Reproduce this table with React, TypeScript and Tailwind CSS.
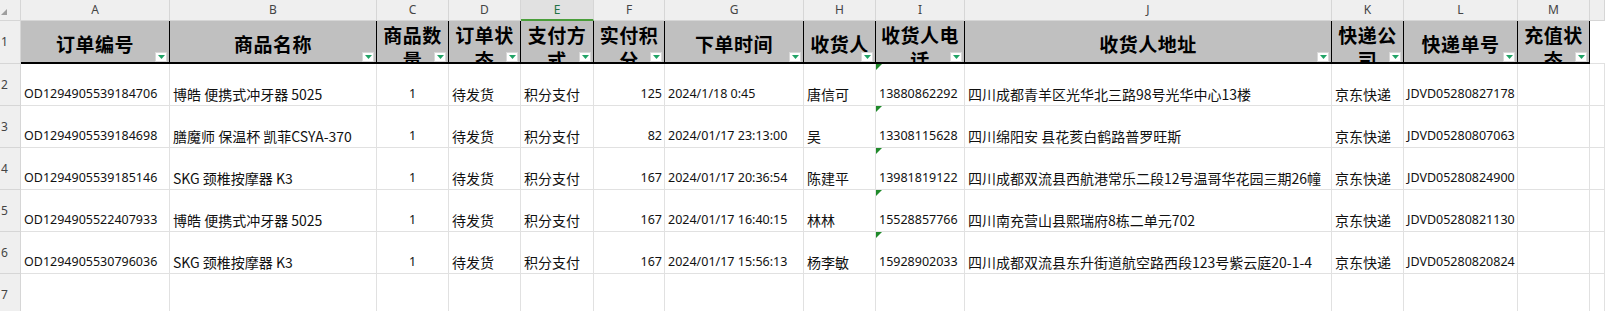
import type { ReactNode } from 'react'

const LETTERS = ['A', 'B', 'C', 'D', 'E', 'F', 'G', 'H', 'I', 'J', 'K', 'L', 'M', '']

const GRID =
  'grid grid-cols-[21px_149px_207px_72px_72px_73px_71px_139px_72px_89px_367px_72px_114px_72px_1fr]'

const HEADERS: { label: string; wrap?: boolean }[] = [
  { label: '订单编号' },
  { label: '商品名称' },
  { label: '商品数量', wrap: true },
  { label: '订单状态', wrap: true },
  { label: '支付方式', wrap: true },
  { label: '实付积分', wrap: true },
  { label: '下单时间' },
  { label: '收货人' },
  { label: '收货人电话', wrap: true },
  { label: '收货人地址' },
  { label: '快递公司', wrap: true },
  { label: '快递单号' },
  { label: '充值状态', wrap: true },
]

type Order = {
  id: string
  name: string
  qty: string
  status: string
  pay: string
  points: string
  time: string
  person: string
  phone: string
  address: string
  courier: string
  tracking: string
}

const ORDERS: Order[] = [
  { id: 'OD1294905539184706', name: '博皓 便携式冲牙器 5025', qty: '1', status: '待发货', pay: '积分支付', points: '125', time: '2024/1/18 0:45', person: '唐信可', phone: '13880862292', address: '四川成都青羊区光华北三路98号光华中心13楼', courier: '京东快递', tracking: 'JDVD05280827178' },
  { id: 'OD1294905539184698', name: '膳魔师 保温杯 凯菲CSYA-370', qty: '1', status: '待发货', pay: '积分支付', points: '82', time: '2024/01/17 23:13:00', person: '吴', phone: '13308115628', address: '四川绵阳安 县花荄白鹤路普罗旺斯', courier: '京东快递', tracking: 'JDVD05280807063' },
  { id: 'OD1294905539185146', name: 'SKG 颈椎按摩器 K3', qty: '1', status: '待发货', pay: '积分支付', points: '167', time: '2024/01/17 20:36:54', person: '陈建平', phone: '13981819122', address: '四川成都双流县西航港常乐二段12号温哥华花园三期26幢', courier: '京东快递', tracking: 'JDVD05280824900' },
  { id: 'OD1294905522407933', name: '博皓 便携式冲牙器 5025', qty: '1', status: '待发货', pay: '积分支付', points: '167', time: '2024/01/17 16:40:15', person: '林林', phone: '15528857766', address: '四川南充营山县熙瑞府8栋二单元702', courier: '京东快递', tracking: 'JDVD05280821130' },
  { id: 'OD1294905530796036', name: 'SKG 颈椎按摩器 K3', qty: '1', status: '待发货', pay: '积分支付', points: '167', time: '2024/01/17 15:56:13', person: '杨李敏', phone: '15928902033', address: '四川成都双流县东升街道航空路西段123号紫云庭20-1-4', courier: '京东快递', tracking: 'JDVD05280820824' },
]

const latin = "font-['Noto_Sans','Noto_Sans_CJK_SC',sans-serif] text-[12.5px]"
const cjk = "font-['Noto_Sans_CJK_SC',sans-serif] text-[14px]"

function FilterButton() {
  return (
    <div className="absolute right-[2px] bottom-0 w-[12px] h-[10px] bg-white border border-[#d8d8d8] flex items-center justify-center">
      <svg width="7" height="4" viewBox="0 0 7 4">
        <polygon points="0,0 7,0 3.5,4" fill="#21a366" />
      </svg>
    </div>
  )
}

function RowHead({ children, className = '' }: { children?: ReactNode; className?: string }) {
  return (
    <div className={`bg-[#efefef] border-r border-b border-[#d6d6d6] text-[12px] text-[#444] font-['Noto_Sans',sans-serif] flex items-center pl-[1px] ${className}`}>
      {children}
    </div>
  )
}

function Cell({ children, className = '', font = cjk }: { children?: ReactNode; className?: string; font?: string }) {
  return (
    <div className={`relative border-r border-b border-[#e1e1e1] flex items-end pb-[2px] px-[3px] whitespace-nowrap overflow-hidden text-[#111] leading-[18px] ${font} ${className}`}>
      {children}
    </div>
  )
}

function TextFlag() {
  return (
    <svg className="absolute top-0 left-0" width="6" height="6" viewBox="0 0 6 6">
      <polygon points="0,0 6,0 0,6" fill="#1f8a2a" />
    </svg>
  )
}

export default function App() {
  return (
    <div className="w-[1605px] h-[311px] overflow-hidden bg-white">
      {/* column letters */}
      <div className={`${GRID} h-[21px]`}>
        <div className="bg-[#efefef] border-r border-b border-[#d6d6d6] relative">
          <svg className="absolute left-[1px] top-[9px]" width="6" height="6" viewBox="0 0 6 6">
            <polygon points="6,0 6,6 0,6" fill="#9e9e9e" />
          </svg>
        </div>
        {LETTERS.map((l, i) => (
          <div
            key={i}
            className={`flex items-center justify-center text-[12px] font-['Noto_Sans',sans-serif] border-r ${
              l === 'E'
                ? 'bg-[#e1e1e1] text-[#217346] border-[#d6d6d6] border-b-2 border-b-[#4a9e3a]'
                : 'bg-[#efefef] text-[#444] border-[#d6d6d6] border-b border-b-[#d6d6d6]'
            }`}
          >
            {l}
          </div>
        ))}
      </div>

      {/* header row */}
      <div className={`${GRID} h-[43px]`}>
        <RowHead>1</RowHead>
        {HEADERS.map((h, i) => (
          <div
            key={i}
            className={`relative overflow-hidden bg-[#c0c0c0] border-r border-black border-b-2 flex justify-center text-center font-['Noto_Sans_CJK_SC',sans-serif] font-bold text-[19px] leading-[25px] text-black ${
              h.wrap ? 'items-start pt-[1px] px-[1px]' : 'items-center pt-[3px]'
            }`}
          >
            <span className="tracking-[0.5px]">{h.label}</span>
            <FilterButton />
          </div>
        ))}
        <div className="border-b border-[#e1e1e1]" />
      </div>

      {/* data rows */}
      {ORDERS.map((o, r) => (
        <div key={o.id} className={`${GRID} h-[42px]`}>
          <RowHead>{r + 2}</RowHead>
          <Cell font={latin}>{o.id}</Cell>
          <Cell>{o.name}</Cell>
          <Cell font={latin} className="justify-center">{o.qty}</Cell>
          <Cell>{o.status}</Cell>
          <Cell>{o.pay}</Cell>
          <Cell font={latin} className="justify-end pr-[2px]">{o.points}</Cell>
          <Cell font={latin}>{o.time}</Cell>
          <Cell>{o.person}</Cell>
          <Cell font={latin}>
            <TextFlag />
            {o.phone}
          </Cell>
          <Cell>{o.address}</Cell>
          <Cell>{o.courier}</Cell>
          <Cell font={latin}>{o.tracking}</Cell>
          <Cell />
          <Cell />
        </div>
      ))}

      {/* empty row 7 */}
      <div className={`${GRID} h-[42px]`}>
        <RowHead>7</RowHead>
        {LETTERS.map((_, i) => (
          <Cell key={i} />
        ))}
      </div>
    </div>
  )
}
